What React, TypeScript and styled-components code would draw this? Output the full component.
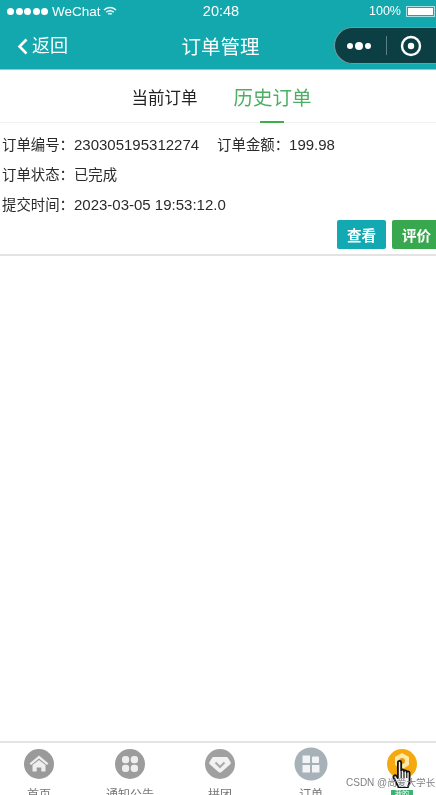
import * as React from "react";
import styled, { createGlobalStyle } from "styled-components";

const GlobalStyle = createGlobalStyle`
  html, body {
    margin: 0;
    padding: 0;
    background: #fff;
    overflow: hidden;
  }
  * { box-sizing: border-box; }
`;

const Page = styled.div`
  position: relative;
  width: 436px;
  height: 795px;
  display: flex;
  flex-direction: column;
  overflow: hidden;
  background: #fff;
  color: #333;
  font-family: "Liberation Sans", "Noto Sans CJK SC", sans-serif;
  filter: blur(0.55px);
`;

const Header = styled.header`
  height: 70px;
  flex: none;
  display: flex;
  flex-direction: column;
  background: #12a8ae;
  border-bottom: 1px solid #7fd4d8;
  color: #fff;
`;

const StatusBar = styled.div`
  height: 22px;
  display: grid;
  grid-template-columns: 1fr auto 1fr;
  align-items: center;
  padding: 0 1px 0 7px;
`;

const StatusLeft = styled.div`
  display: flex;
  align-items: center;
  gap: 2px;
  font-size: 13.5px;
`;

const Dots = styled.span`
  display: flex;
  gap: 1.5px;
  margin-right: 2px;
`;

const Dot = styled.i`
  width: 7px;
  height: 7px;
  border-radius: 50%;
  background: #fff;
`;

const StatusTime = styled.div`
  font-size: 14.5px;
`;

const StatusRight = styled.div`
  display: flex;
  justify-content: flex-end;
  align-items: center;
  gap: 5px;
  font-size: 12.5px;
`;

const Battery = styled.span`
  width: 29px;
  height: 11px;
  border: 1px solid #a8e2e4;
  padding: 1px;
  display: block;
  &::after {
    content: "";
    display: block;
    height: 100%;
    background: #fff;
  }
`;

const NavBar = styled.div`
  flex: 1;
  position: relative;
  display: flex;
  align-items: center;
  justify-content: center;
  padding-bottom: 1px;
`;

const Back = styled.div`
  position: absolute;
  left: 17px;
  top: 11px;
  display: flex;
  align-items: center;
  gap: 4px;
  font-size: 18px;
  line-height: 26px;
`;

const Title = styled.div`
  font-size: 19.5px;
  margin-left: 5px;
`;

const Capsule = styled.div`
  position: absolute;
  left: 334px;
  top: 5px;
  width: 102px;
  height: 37px;
  border-radius: 19px 0 0 19px;
  background: #0c3f44;
  border: 1px solid #6f9ea1;
  border-right: none;
  display: flex;
  align-items: center;
  padding-left: 12px;
`;

const CapsuleDots = styled.span`
  display: flex;
  align-items: center;
  gap: 2px;
  width: 27px;
`;

const CapsuleDot = styled.i<{ $big?: boolean }>`
  width: ${props => (props.$big ? 8 : 6)}px;
  height: ${props => (props.$big ? 8 : 6)}px;
  border-radius: 50%;
  background: #fff;
`;

const CapsuleRule = styled.span`
  width: 1px;
  height: 19px;
  margin: 0 13px 0 12px;
  background: #5d8084;
`;

const Tabs = styled.nav`
  height: 53px;
  flex: none;
  display: flex;
  justify-content: center;
  align-items: flex-start;
  gap: 36px;
  border-bottom: 1px solid #f1f1f1;
  padding: 16px 0 0 7px;
`;

const Tab = styled.div<{ $active?: boolean }>`
  position: relative;
  font-size: ${props => (props.$active ? 19.5 : 16.5)}px;
  line-height: ${props => (props.$active ? 24 : 22)}px;
  height: 37px;
  margin-top: ${props => (props.$active ? 0 : 1)}px;
  color: ${props => (props.$active ? "#4caf63" : "#222")};
  ${props =>
    props.$active &&
    `&::after {
      content: "";
      position: absolute;
      left: 27px;
      bottom: 0;
      width: 24px;
      height: 2px;
      background: #3aaf50;
    }`}
`;

const OrderCard = styled.section`
  height: 133px;
  flex: none;
  display: flex;
  flex-direction: column;
  padding: 11px 0 0 2px;
  border-bottom: 2px solid #e3e3e3;
  font-size: 15px;
  color: #2a2a2a;
`;

const InfoRow = styled.div`
  height: 30px;
  line-height: 22px;
  display: flex;
  white-space: nowrap;
`;

const Label = styled.span`
  font-size: 14.4px;
`;

const Amount = styled.span`
  margin-left: 18px;
`;

const Actions = styled.div`
  display: flex;
  justify-content: flex-end;
  gap: 6px;
  margin: -4px -5px 0 0;
`;

const ActionButton = styled.button<{ $tone: string }>`
  width: 49px;
  height: 29px;
  border: none;
  border-radius: 2px;
  padding: 0;
  background: ${props => props.$tone};
  color: #fff;
  font: bold 14.5px "Liberation Sans", "Noto Sans CJK SC", sans-serif;
`;

const Spacer = styled.main`
  flex: 1;
`;

const TabBar = styled.footer`
  height: 54px;
  flex: none;
  display: grid;
  grid-template-columns: 78px 104px 76px 106px 76px;
  border-top: 2px solid #e4e4e4;
  overflow: hidden;
`;

const TabItem = styled.div`
  display: flex;
  flex-direction: column;
  align-items: center;
  padding-top: 5px;
`;

const TabIcon = styled.span<{ $size: number }>`
  height: 32px;
  display: flex;
  align-items: center;
  & > svg {
    width: ${props => props.$size}px;
    height: ${props => props.$size}px;
  }
`;

const TabLabel = styled.span<{ $active?: boolean }>`
  font-size: 12px;
  line-height: 15px;
  margin-top: 8px;
  color: #777;
  ${props =>
    props.$active &&
    `color: #fff;
    background: #3cb371;
    font-size: 7px;
    line-height: 8px;
    margin-top: 10px;
    padding: 0 4px;`}
`;

const Watermark = styled.div`
  position: absolute;
  left: 346px;
  top: 777px;
  font-size: 10px;
  line-height: 12px;
  color: #7f7f85;
  white-space: nowrap;
`;

const WatermarkName = styled.span`
  font-size: 9.6px;
`;

const Pointer = styled.svg`
  position: absolute;
  left: 392px;
  top: 760px;
  width: 20px;
  height: 28px;
`;

const Wifi = () => (
  <svg width="14" height="11" viewBox="0 0 14 11" fill="none" stroke="#fff" strokeWidth="1.5">
    <path d="M1 4a8.5 8.5 0 0 1 12 0" />
    <path d="M3.2 6.2a5.4 5.4 0 0 1 7.6 0" />
    <path d="M5.3 8.3a2.4 2.4 0 0 1 3.4 0" />
  </svg>
);

const HomeIcon = () => (
  <svg viewBox="0 0 32 32">
    <circle cx="16" cy="16" r="15" fill="#9a9a9a" />
    <path d="M6.5 15.5 16 7.5l9.5 8-1.6 1.6L16 10.6l-7.9 6.5z" fill="#eee" />
    <path d="M9.5 17 16 12l6.5 5v6.5h-4.2v-4h-4.6v4H9.5z" fill="#eee" />
  </svg>
);

const NoticeIcon = () => (
  <svg viewBox="0 0 32 32">
    <circle cx="16" cy="16" r="15" fill="#9c9c9c" />
    <g fill="#eee">
      <rect x="8" y="8" width="7.2" height="7.2" rx="3" />
      <rect x="16.8" y="8" width="7.2" height="7.2" rx="3" />
      <rect x="8" y="16.8" width="7.2" height="7.2" rx="3" />
      <rect x="16.8" y="16.8" width="7.2" height="7.2" rx="3" />
    </g>
  </svg>
);

const GroupIcon = () => (
  <svg viewBox="0 0 32 32">
    <circle cx="16" cy="16" r="15" fill="#a0a0a0" />
    <path
      d="M10 9h12c1 0 1.500.3 2 1l2.500 4c.5.8.4 1.500-.2 2.200L17.500 24c-.9.8-2.100.8-3 0l-8.800-7.800c-.6-.7-.7-1.400-.2-2.200L8 10c.5-.7 1-1 2-1z"
      fill="#f2f2f2"
    />
    <path d="M11.500 14.500 16 19l4.500-4.500" fill="none" stroke="#aaa" strokeWidth="2" />
  </svg>
);

const OrderIcon = () => (
  <svg viewBox="0 0 34 34">
    <circle cx="17" cy="17" r="16.5" fill="#a6b2b8" />
    <g fill="#f2f4f5">
      <rect x="8.5" y="8.5" width="7.5" height="7.5" />
      <rect x="18" y="9.5" width="7" height="6.5" rx="1" />
      <rect x="8.5" y="18" width="7.5" height="7.5" />
      <rect x="18" y="18" width="7.5" height="7.5" />
    </g>
  </svg>
);

const ProfileIcon = () => (
  <svg viewBox="0 0 32 32">
    <circle cx="16" cy="16" r="15" fill="#f5a90f" />
    <path d="M16 5l7 4v8l-7 4.500L9 17V9z" fill="#ffe9a8" />
    <circle cx="16" cy="13" r="3" fill="#e89a0c" />
  </svg>
);

const tabItems = [
  { label: "首页", icon: <HomeIcon />, size: 32 },
  { label: "通知公告", icon: <NoticeIcon />, size: 32 },
  { label: "拼团", icon: <GroupIcon />, size: 32 },
  { label: "订单", icon: <OrderIcon />, size: 34 },
  { label: "我的", icon: <ProfileIcon />, size: 32, active: true },
];

const App: React.FC = () => {
  return (
    <Page>
      <GlobalStyle />
      <Header>
        <StatusBar>
          <StatusLeft>
            <Dots>
              {[0, 1, 2, 3, 4].map(i => (
                <Dot key={i} />
              ))}
            </Dots>
            WeChat
            <Wifi />
          </StatusLeft>
          <StatusTime>20:48</StatusTime>
          <StatusRight>
            100%
            <Battery />
          </StatusRight>
        </StatusBar>
        <NavBar>
          <Back>
            <svg width="11" height="17" viewBox="0 0 11 17" fill="none" stroke="#fff" strokeWidth="2.6">
              <path d="M9.5 1.5 2.5 8.500l7 7" />
            </svg>
            返回
          </Back>
          <Title>订单管理</Title>
          <Capsule>
            <CapsuleDots>
              <CapsuleDot />
              <CapsuleDot $big />
              <CapsuleDot />
            </CapsuleDots>
            <CapsuleRule />
            <svg width="22" height="22" viewBox="0 0 22 22" fill="none">
              <circle cx="11" cy="11" r="9" stroke="#fff" strokeWidth="2.4" />
              <circle cx="11" cy="11" r="3.2" fill="#fff" />
            </svg>
          </Capsule>
        </NavBar>
      </Header>
      <Tabs>
        <Tab>当前订单</Tab>
        <Tab $active>历史订单</Tab>
      </Tabs>
      <OrderCard>
        <InfoRow>
          <Label>订单编号：</Label>230305195312274
          <Amount>
            <Label>订单金额：</Label>199.98
          </Amount>
        </InfoRow>
        <InfoRow>
          <Label>订单状态：已完成</Label>
        </InfoRow>
        <InfoRow>
          <Label>提交时间：</Label>2023-03-05 19:53:12.0
        </InfoRow>
        <Actions>
          <ActionButton $tone="#13a9b3">查看</ActionButton>
          <ActionButton $tone="#38a84e">评价</ActionButton>
        </Actions>
      </OrderCard>
      <Spacer />
      <TabBar>
        {tabItems.map(item => (
          <TabItem key={item.label}>
            <TabIcon $size={item.size}>{item.icon}</TabIcon>
            <TabLabel $active={item.active}>{item.label}</TabLabel>
          </TabItem>
        ))}
      </TabBar>
      <Pointer viewBox="0 0 24 34">
        <path
          d="M7 3c0-2.500 4-2.500 4 0v10c0-2 3.400-2 3.400 0v1c0-2 3.400-2 3.400 0v1.200c0-2 3.400-1.800 3.400.4V25c0 4-1.500 6-2.500 9H8C7 31 3.500 25 1.800 21.500c-1-2.500 2-4 3.500-2L7 22z"
          fill="#f4f4f4"
          stroke="#111"
          strokeWidth="2.2"
          strokeLinejoin="round"
        />
        <path d="M11 14v8M14.400 15v7M17.800 16v6" stroke="#111" strokeWidth="1.4" />
      </Pointer>
      <Watermark>
        CSDN @<WatermarkName>尚爱大学长</WatermarkName>
      </Watermark>
    </Page>
  );
};

export default App;
